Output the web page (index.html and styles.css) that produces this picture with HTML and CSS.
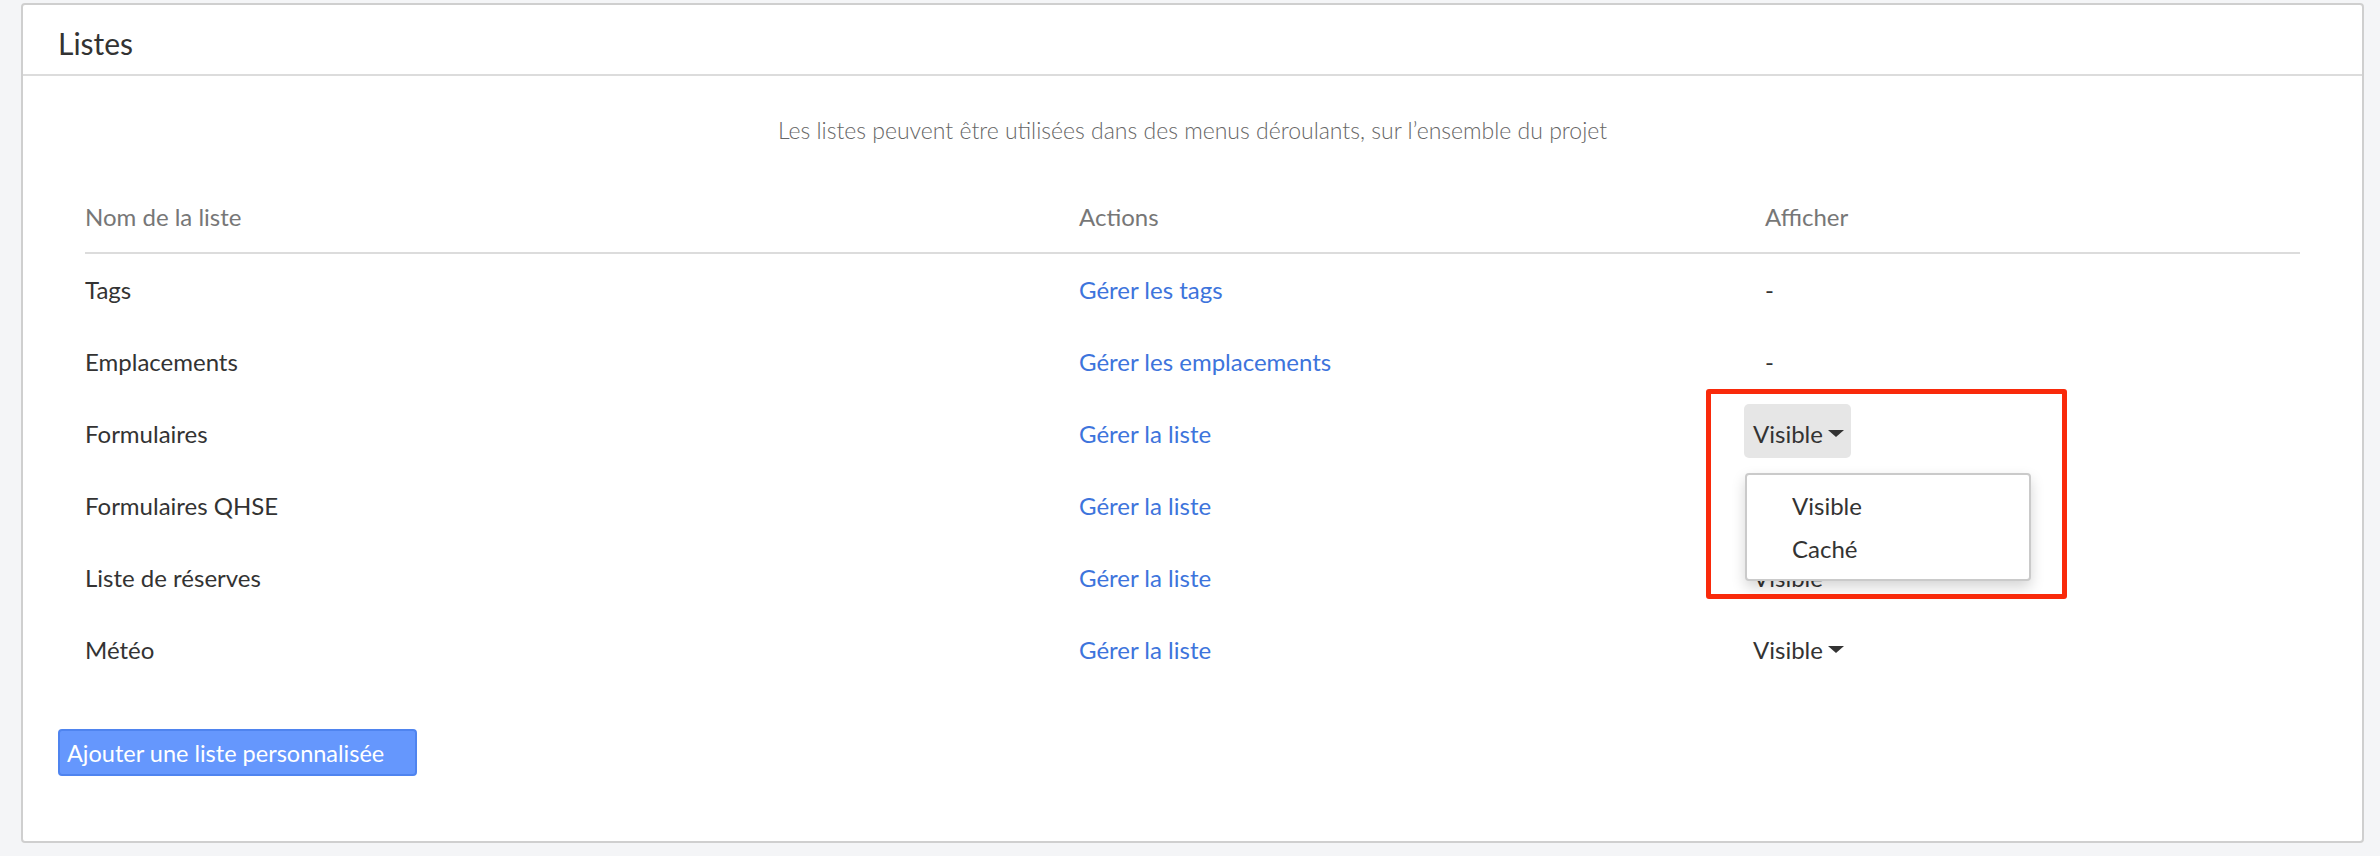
FILE: index.html
```html
<!DOCTYPE html>
<html lang="fr">
  <head>
    <meta charset="UTF-8">
    <title>Listes</title>
    <link rel="stylesheet" href="styles.css">
  </head>
  <body>
    <div class="card">
      <div class="card-header">Listes</div>
      <div class="card-body">
        <p class="intro">Les listes peuvent être utilisées dans des menus déroulants, sur l’ensemble du projet</p>
        <table class="lists">
          <thead>
            <tr>
              <th class="col-name">Nom de la liste</th>
              <th class="col-actions">Actions</th>
              <th>Afficher</th>
            </tr>
          </thead>
          <tbody>
            <tr>
              <td>Tags</td>
              <td><a href="#">Gérer les tags</a></td>
              <td>-</td>
            </tr>
            <tr>
              <td>Emplacements</td>
              <td><a href="#">Gérer les emplacements</a></td>
              <td>-</td>
            </tr>
            <tr>
              <td>Formulaires</td>
              <td><a href="#">Gérer la liste</a></td>
              <td>
                <span class="toggle open">Visible<span class="caret"></span>
                  <span class="highlight"></span>
                  <ul class="menu">
                    <li>Visible</li>
                    <li>Caché</li>
                  </ul>
                </span>
              </td>
            </tr>
            <tr>
              <td>Formulaires QHSE</td>
              <td><a href="#">Gérer la liste</a></td>
              <td><span class="toggle">Visible<span class="caret"></span></span></td>
            </tr>
            <tr>
              <td>Liste de réserves</td>
              <td><a href="#">Gérer la liste</a></td>
              <td><span class="toggle">Visible<span class="caret"></span></span></td>
            </tr>
            <tr>
              <td>Météo</td>
              <td><a href="#">Gérer la liste</a></td>
              <td><span class="toggle">Visible<span class="caret"></span></span></td>
            </tr>
          </tbody>
        </table>
        <button class="btn-add">Ajouter une liste personnalisée</button>
      </div>
    </div>
  </body>
</html>
```

FILE: styles.css
```css
body {
  margin: 0;
  padding: 3px 16px 0 21px;
  background: #f4f5f7;
  font-family: Lato, "Open Sans", sans-serif;
  font-size: 24px;
  color: #333;
}

.card {
  background: #fff;
  border: 2px solid #cfcfcf;
  border-radius: 4px;
}

.card-header {
  padding: 20px 35px 13px;
  font-size: 30px;
  line-height: 36px;
  border-bottom: 2px solid #dcdcdc;
}

.card-body {
  padding: 36px 35px 65px;
}

.intro {
  margin: 0;
  text-align: center;
  font-size: 23px;
  font-weight: 300;
  line-height: 36px;
  color: #666;
}

.lists {
  margin: 34px 27px 0;
  width: 2215px;
  border-collapse: collapse;
  table-layout: fixed;
}

.lists th {
  text-align: left;
  font-weight: normal;
  color: #777;
  padding: 17px 0;
  line-height: 36px;
  border-bottom: 2px solid #dcdcdc;
}

.lists td {
  padding: 18px 0;
  line-height: 36px;
}

.col-name { width: 994px; }
.col-actions { width: 686px; }

.lists a {
  color: #3d74dc;
  text-decoration: none;
}

.toggle {
  display: inline-block;
  position: relative;
  margin: -12px 0 -6px -21px;
  padding: 12px 7px 6px 9px;
  border-radius: 5px;
}

.toggle.open {
  background: #e6e6e6;
}

.caret {
  display: inline-block;
  margin-left: 5px;
  vertical-align: middle;
  border-top: 7px solid #333;
  border-left: 8px solid transparent;
  border-right: 8px solid transparent;
  position: relative;
  top: -3px;
}

.menu {
  position: absolute;
  top: 100%;
  left: 1px;
  z-index: 2;
  width: 282px;
  margin: 15px 0 0;
  padding: 9px 0;
  list-style: none;
  background: #fff;
  border: 2px solid #cacaca;
  border-radius: 4px;
  box-shadow: 0 6px 14px rgba(0, 0, 0, 0.17);
}

.menu li {
  padding-left: 45px;
  line-height: 43px;
  color: #333;
}

.highlight {
  position: absolute;
  left: -38px;
  top: -15px;
  width: 351px;
  height: 200px;
  border: 5px solid #f92a0b;
  border-radius: 3px;
  z-index: 3;
}

.btn-add {
  display: block;
  margin-top: 43px;
  width: 359px;
  height: 47px;
  padding: 0 7px;
  text-align: left;
  font-family: inherit;
  font-size: 23.5px;
  color: #fff;
  background: #6597fd;
  border: 2px solid #4f84ef;
  border-radius: 4px;
}
```
